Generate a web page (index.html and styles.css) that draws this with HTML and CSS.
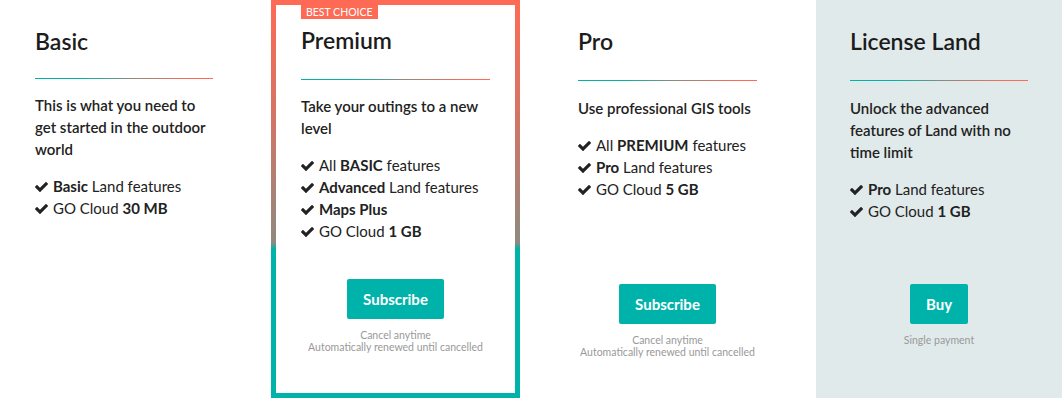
FILE: index.html
```html
<!DOCTYPE html>
<html lang="en">
<head>
<meta charset="utf-8">
<title>Plans</title>
<link rel="stylesheet" href="styles.css">
</head>
<body>
<svg width="0" height="0" style="position:absolute">
  <defs>
    <symbol id="check" viewBox="121 430 1550 1000">
      <path d="M1671 566q0 40-28 68l-724 724-136 136q-28 28-68 28t-68-28l-136-136-362-362q-28-28-28-68t28-68l136-136q28-28 68-28t68 28l294 295 656-657q28-28 68-28t68 28l136 136q28 28 28 68z"/>
    </symbol>
  </defs>
</svg>
<main class="plans">
  <section class="plan plan--basic">
    <h2 class="plan-title">Basic</h2>
    <div class="divider"></div>
    <p class="plan-desc">This is what you need to get started in the outdoor world</p>
    <ul class="features">
      <li><svg class="check"><use href="#check"/></svg><span><b>Basic</b> Land features</span></li>
      <li><svg class="check"><use href="#check"/></svg><span>GO Cloud <b>30 MB</b></span></li>
    </ul>
  </section>

  <section class="plan plan--premium">
    <span class="badge">BEST CHOICE</span>
    <h2 class="plan-title">Premium</h2>
    <div class="divider"></div>
    <p class="plan-desc">Take your outings to a new level</p>
    <ul class="features">
      <li><svg class="check"><use href="#check"/></svg><span>All <b>BASIC</b> features</span></li>
      <li><svg class="check"><use href="#check"/></svg><span><b>Advanced</b> Land features</span></li>
      <li><svg class="check"><use href="#check"/></svg><span><b>Maps Plus</b></span></li>
      <li><svg class="check"><use href="#check"/></svg><span>GO Cloud <b>1 GB</b></span></li>
    </ul>
    <div class="plan-footer">
      <a class="btn" href="#">Subscribe</a>
      <p class="note">Cancel anytime<br>Automatically renewed until cancelled</p>
    </div>
  </section>

  <section class="plan plan--pro">
    <h2 class="plan-title">Pro</h2>
    <div class="divider"></div>
    <p class="plan-desc">Use professional GIS tools</p>
    <ul class="features">
      <li><svg class="check"><use href="#check"/></svg><span>All <b>PREMIUM</b> features</span></li>
      <li><svg class="check"><use href="#check"/></svg><span><b>Pro</b> Land features</span></li>
      <li><svg class="check"><use href="#check"/></svg><span>GO Cloud <b>5 GB</b></span></li>
    </ul>
    <div class="plan-footer">
      <a class="btn" href="#">Subscribe</a>
      <p class="note">Cancel anytime<br>Automatically renewed until cancelled</p>
    </div>
  </section>

  <section class="plan plan--license">
    <h2 class="plan-title">License Land</h2>
    <div class="divider"></div>
    <p class="plan-desc">Unlock the advanced features of Land with no time limit</p>
    <ul class="features">
      <li><svg class="check"><use href="#check"/></svg><span><b>Pro</b> Land features</span></li>
      <li><svg class="check"><use href="#check"/></svg><span>GO Cloud <b>1 GB</b></span></li>
    </ul>
    <div class="plan-footer">
      <a class="btn" href="#">Buy</a>
      <p class="note">Single payment</p>
    </div>
  </section>
</main>
</body>
</html>
```

FILE: styles.css
```css
* { box-sizing: border-box; }

html, body {
  margin: 0;
  padding: 0;
  background: #fff;
}

body {
  font-family: Lato, "Open Sans", sans-serif;
  color: #222;
  overflow: hidden;
}

.plans {
  display: grid;
  grid-template-columns: 247px 249px 248px 246px;
  column-gap: 24px;
  height: 398px;
}

.plan {
  display: flex;
  flex-direction: column;
  padding: 27px 35px 40px 34px;
  min-width: 0;
}

.plan--basic {
  padding-left: 35px;
  padding-right: 34px;
}

.plan--premium {
  padding: 0 25px 40px 25px;
  border: 5px solid transparent;
  background:
    linear-gradient(#fff, #fff) padding-box,
    linear-gradient(to bottom, #ff6a55 0%, #d27566 30%, #8e8a80 61%, #00b3aa 62.5%, #00b3aa 100%) border-box;
}

.plan--license {
  background: #e1eaeb;
  padding-left: 34px;
  padding-right: 34px;
}

.badge {
  align-self: flex-start;
  height: 14px;
  line-height: 14px;
  padding: 0 5px;
  background: #ff6a55;
  color: #fff;
  font-size: 10.5px;
}

.plan-title {
  margin: 0;
  font-size: 23px;
  line-height: 29px;
  font-weight: 600;
  color: #1c1c1c;
}

.plan--premium .plan-title {
  margin-top: 7px;
}

.divider {
  height: 1px;
  margin-top: 24px;
  background: linear-gradient(to right, #00b3aa 25%, #8f8a80 55%, #ff6a55 88%);
}

.plan--basic .divider {
  margin-top: 22px;
}

.plan-desc {
  margin: 15px 0 0;
  font-size: 15px;
  line-height: 22px;
  font-weight: 600;
  color: #222;
}

.plan--pro .plan-desc,
.plan--license .plan-desc {
  margin-top: 16px;
}

.features {
  list-style: none;
  margin: 15px 0 0;
  padding: 0;
  font-size: 15px;
  line-height: 22px;
}

.features li {
  display: flex;
  align-items: baseline;
  white-space: nowrap;
}

.features b {
  font-weight: 700;
}

.check {
  flex: none;
  width: 13px;
  height: 10px;
  margin-right: 5px;
  fill: #222;
}

.plan-footer {
  margin-top: auto;
  display: flex;
  flex-direction: column;
  align-items: center;
  text-align: center;
}

.btn {
  display: block;
  height: 40px;
  line-height: 40px;
  padding: 0 16px;
  background: #00b3aa;
  color: #fff;
  border-radius: 2px;
  font-size: 15px;
  font-weight: 700;
  text-decoration: none;
}

.note {
  margin: 10px 0 0;
  min-height: 24px;
  font-size: 10.5px;
  line-height: 12px;
  color: #999;
  white-space: nowrap;
}
```
